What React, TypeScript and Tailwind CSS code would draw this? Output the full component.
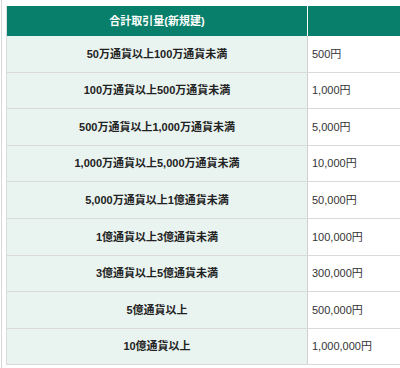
import React from "react";

const rows: [string, string][] = [
  ["50万通貨以上100万通貨未満", "500円"],
  ["100万通貨以上500万通貨未満", "1,000円"],
  ["500万通貨以上1,000万通貨未満", "5,000円"],
  ["1,000万通貨以上5,000万通貨未満", "10,000円"],
  ["5,000万通貨以上1億通貨未満", "50,000円"],
  ["1億通貨以上3億通貨未満", "100,000円"],
  ["3億通貨以上5億通貨未満", "300,000円"],
  ["5億通貨以上", "500,000円"],
  ["10億通貨以上", "1,000,000円"],
];

export default function App() {
  return (
    <div
      className="w-[400px] h-[368px] overflow-hidden bg-white"
      style={{ fontFamily: '"Liberation Sans", "Noto Sans CJK JP", sans-serif' }}
    >
      <div className="ml-[1px] h-full border-l border-[#d6d6d6] pl-[4px] pt-[6px]">
        <div className="w-[440px] border-l border-[#dcdcdc]">
          <div className="grid grid-cols-[301px_1fr] h-[30px]">
            <div className="bg-[#077f6b] border-r-[1px] border-white flex items-center justify-center text-white font-bold text-[11px]">
              合計取引量(新規建)
            </div>
            <div className="bg-[#077f6b]" />
          </div>
          {rows.map(([a, b], i) => (
            <div
              key={i}
              className="grid grid-cols-[301px_1fr] h-[36.6px] border-b border-[#dadada]"
            >
              <div className="bg-[#e9f3f0] border-r border-[#d0d0d0] flex items-center justify-center font-bold text-[11px] text-[#222]">
                {a}
              </div>
              <div className="bg-white flex items-center pl-[4px] text-[11px] text-[#333]">
                {b}
              </div>
            </div>
          ))}
        </div>
      </div>
    </div>
  );
}
